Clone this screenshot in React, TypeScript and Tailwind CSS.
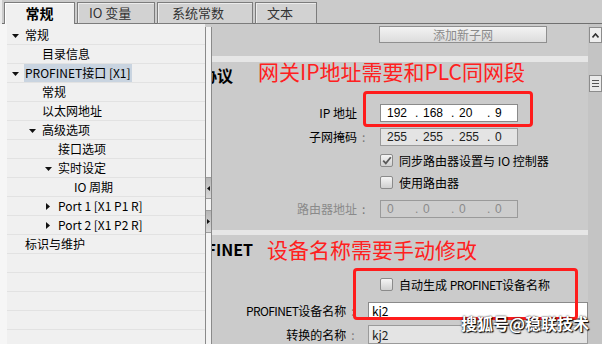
import React from "react";

type Node = {
  label: string;
  level: number;
  arrow?: "down" | "right";
  selected?: boolean;
};

const tree: Node[] = [
  { label: "常规", level: 0, arrow: "down" },
  { label: "目录信息", level: 1 },
  { label: "PROFINET接口 [X1]", level: 0, arrow: "down", selected: true },
  { label: "常规", level: 1 },
  { label: "以太网地址", level: 1 },
  { label: "高级选项", level: 1, arrow: "down" },
  { label: "接口选项", level: 2 },
  { label: "实时设定", level: 2, arrow: "down" },
  { label: "IO 周期", level: 3 },
  { label: "Port 1 [X1 P1 R]", level: 2, arrow: "right" },
  { label: "Port 2 [X1 P2 R]", level: 2, arrow: "right" },
  { label: "标识与维护", level: 0 },
];

const indent = ["pl-[5px]", "pl-[22px]", "pl-[38px]", "pl-[54px]"];

function Arrow({ dir }: { dir: "down" | "right" }) {
  if (dir === "down") {
    return (
      <svg width="7" height="4" viewBox="0 0 7 4" className="mt-[2px]">
        <path d="M0 0 H7 L3.5 4 Z" fill="#111" />
      </svg>
    );
  }
  return (
    <svg width="4" height="7" viewBox="0 0 4 7" className="ml-[1px]">
      <path d="M0 0 V7 L4 3.5 Z" fill="#111" />
    </svg>
  );
}

function TabBar() {
  return (
    <div className="flex h-[24px] items-end gap-[2px] bg-[#cbcbcb] shadow-[inset_0_-1px_0_#707070]">
      <div className="w-[2px] self-stretch bg-[#ececec]" />
      <div className="flex h-[22px] w-[71px] items-center justify-center border border-b-0 border-[#7c7c7c] bg-[#f0f0f0] text-[14px] font-bold text-black shadow-[inset_1px_1px_0_#ffffff]">
        常规
      </div>
      <div className="flex h-[22px] w-[78px] items-center border border-[#7c7c7c] bg-[#d2d2d2] pl-[11px] text-[13px] text-[#333] shadow-[inset_1px_1px_0_#ececec]">
        IO 变量
      </div>
      <div className="flex h-[22px] w-[96px] items-center border border-[#7c7c7c] bg-[#d2d2d2] pl-[14px] text-[13px] text-[#333] shadow-[inset_1px_1px_0_#ececec]">
        系统常数
      </div>
      <div className="flex h-[22px] w-[62px] items-center border border-[#7c7c7c] bg-[#d2d2d2] pl-[11px] text-[13px] text-[#333] shadow-[inset_1px_1px_0_#ececec]">
        文本
      </div>
    </div>
  );
}

function Tree() {
  return (
    <div className="flex w-[205px] bg-[#f0f0f0]">
      <div className="w-[7px] bg-[#f6f6f6]" />
      <div className="flex-1 pt-[2px]">
        {tree.map((n, i) => (
          <div
            key={i}
            className={`flex h-[19px] items-center border-b border-[#e2e2e2] text-[12px] text-black ${indent[n.level]}`}
          >
            <div className="flex w-[13px] items-center">
              {n.arrow && <Arrow dir={n.arrow} />}
            </div>
            {n.selected ? (
              <span className="-ml-[1px] flex h-full items-center bg-[#c9d4e0] px-[1px]">
                {n.label}
              </span>
            ) : (
              <span>{n.label}</span>
            )}
          </div>
        ))}
        {[0, 1, 2, 3, 4].map((i) => (
          <div key={i} className="h-[19px] border-b border-[#e2e2e2]" />
        ))}
      </div>
    </div>
  );
}

function Splitter() {
  return (
    <div className="mt-[3px] flex w-[7px] flex-col border-x border-[#8a8a8a] bg-[#f3f3f3]">
      <div className="h-[150px]" />
      <div className="flex h-[22px] items-center border-y border-[#9c9c9c] bg-gradient-to-b from-[#b6b6b6] to-[#d8d8d8]">
        <svg width="3" height="5" viewBox="0 0 3 5" className="ml-[1px]">
          <path d="M3 0 V5 L0 2.5 Z" fill="#111" />
        </svg>
      </div>
      <div className="h-[11px]" />
      <div className="flex h-[23px] items-center border-y border-[#9c9c9c] bg-gradient-to-b from-[#b6b6b6] to-[#d8d8d8]">
        <svg width="3" height="5" viewBox="0 0 3 5" className="ml-[1px]">
          <path d="M0 0 V5 L3 2.5 Z" fill="#111" />
        </svg>
      </div>
    </div>
  );
}

function CheckBox({ checked }: { checked?: boolean }) {
  return (
    <div className="flex h-[13px] w-[13px] items-center justify-center rounded-[2px] border border-[#8b8b8b] bg-gradient-to-b from-[#f5f5f5] to-[#d0d0d0]">
      {checked && (
        <svg width="10" height="9" viewBox="0 0 10 9">
          <path d="M1.2 4.6 L3.8 7.4 L8.8 1.2" fill="none" stroke="#5a5a5a" strokeWidth="1.8" />
        </svg>
      )}
    </div>
  );
}

function IpFields({ parts }: { parts: string[] }) {
  return (
    <div className="flex items-center pl-[6px] font-['Liberation_Sans',sans-serif] text-[12px]">
      {parts.map((p, i) => (
        <React.Fragment key={i}>
          <span className="w-[28px]">{p}</span>
          {i < 3 && <span className="w-[8px]">.</span>}
        </React.Fragment>
      ))}
    </div>
  );
}

function FieldRow({
  label,
  colon,
  gray,
  className,
  children,
}: {
  label: React.ReactNode;
  colon?: boolean;
  gray?: boolean;
  className: string;
  children: React.ReactNode;
}) {
  return (
    <div className={`flex items-center text-[12px] ${className}`}>
      <div className={`w-[145px] text-right ${gray ? "text-[#8a8a8a]" : "text-black"}`}>{label}</div>
      <div className="w-[23px] pl-[5px] text-[#777]">{colon ? ":" : ""}</div>
      {children}
    </div>
  );
}

function RightPane() {
  return (
    <div className="relative flex-1 overflow-hidden bg-[#cbcbcb]">
      <div className="h-[32px] pl-[167px] pt-[2px]">
        <div className="flex h-[17px] w-[168px] items-center justify-center border border-[#8f8f8f] bg-gradient-to-b from-[#f3f3f3] to-[#dcdcdc] text-[12px] text-[#8a8a8a]">
          添加新子网
        </div>
      </div>
      <div className="h-[6px] bg-[#e6e6e6]" />

      <div className="h-[168px]">
        <div className="-ml-[60px] flex h-[26px] w-[81px] items-center justify-end whitespace-nowrap text-[16px] font-bold text-black">
          IP 协议
        </div>
        <FieldRow label="IP 地址" className="mt-[16px] h-[18px]">
          <div className="flex h-[18px] w-[138px] items-center border border-[#8a8a8a] bg-white text-black">
            <IpFields parts={["192", "168", "20", "9"]} />
          </div>
        </FieldRow>
        <FieldRow label="子网掩码" colon className="mt-[6px] h-[18px]">
          <div className="flex h-[18px] w-[138px] items-center border border-[#9a9a9a] bg-[#e4e4e4] text-[#222]">
            <IpFields parts={["255", "255", "255", "0"]} />
          </div>
        </FieldRow>
        <div className="mt-[8px] flex h-[13px] items-center gap-[6px] pl-[168px] text-[12px] text-black">
          <CheckBox checked />
          <span>同步路由器设置与 IO 控制器</span>
        </div>
        <div className="mt-[9px] flex h-[13px] items-center gap-[6px] pl-[168px] text-[12px] text-black">
          <CheckBox />
          <span>使用路由器</span>
        </div>
        <FieldRow label="路由器地址" colon gray className="mt-[11px] h-[18px]">
          <div className="flex h-[18px] w-[138px] items-center border border-[#9a9a9a] bg-[#cdcdcd] text-[#8a8a8a]">
            <IpFields parts={["0", "0", "0", "0"]} />
          </div>
        </FieldRow>
      </div>
      <div className="h-[5px] bg-[#e6e6e6]" />

      <div>
        <div className="-ml-[60px] flex h-[28px] w-[101px] items-center justify-end whitespace-nowrap text-[16px] font-bold text-black">
          PROFINET
        </div>
        <div className="mt-[15px] flex h-[13px] items-center gap-[6px] pl-[168px] text-[12px] text-black">
          <CheckBox />
          <span>
            自动生成 <span className="tracking-[-0.6px]">PROFINET</span>设备名称
          </span>
        </div>
        <FieldRow
          label={
            <>
              <span className="tracking-[-0.6px]">PROFINET</span>设备名称
            </>
          }
          colon
          className="mt-[11px] h-[17px]"
        >
          <div className="flex h-[17px] w-[220px] shrink-0 items-center border border-[#8a8a8a] bg-white pl-[3px] text-black">
            kj2
          </div>
        </FieldRow>
        <FieldRow label="转换的名称" colon className="mt-[6px] h-[19px]">
          <div className="flex h-[19px] w-[220px] shrink-0 items-center border border-[#9a9a9a] bg-[#e4e4e4] pl-[3px] text-[#222]">
            kj2
          </div>
        </FieldRow>
      </div>
    </div>
  );
}

function ScrollBar() {
  return (
    <div className="flex w-[14px] flex-col bg-[#c4c4c4] pt-[3px]">
      <div className="ml-[1px] flex h-[16px] w-[13px] items-center justify-center border border-[#8c8c8c] bg-[#eeeeee]">
        <svg width="7" height="5" viewBox="0 0 7 5">
          <path d="M0.5 4.5 L3.5 1 L6.5 4.5" fill="none" stroke="#333" strokeWidth="1.6" />
        </svg>
      </div>
      <div className="h-[32px]" />
      <div className="ml-[1px] flex h-[17px] w-[13px] flex-col items-center justify-center gap-[2px] border border-[#8c8c8c] bg-[#eaeaea]">
        <div className="h-px w-[7px] bg-[#555]" />
        <div className="h-px w-[7px] bg-[#555]" />
        <div className="h-px w-[7px] bg-[#555]" />
      </div>
    </div>
  );
}

export default function App() {
  return (
    <div className="relative flex h-[344px] w-[602px] flex-col overflow-hidden bg-[#cbcbcb] font-['Noto_Sans_CJK_SC',sans-serif]">
      <TabBar />
      <div className="flex min-h-0 flex-1">
        <Tree />
        <Splitter />
        <RightPane />
        <ScrollBar />
      </div>

      {/* annotations drawn over the screenshot */}
      <div className="absolute left-[258px] top-[61px] whitespace-nowrap text-[21px] leading-none text-[#ff2020]">
        网关IP地址需要和PLC同网段
      </div>
      <div className="absolute left-[363px] top-[91px] h-[36px] w-[170px] rounded-[4px] border-[3px] border-[#ff1c1c]" />
      <div className="absolute left-[267px] top-[239px] whitespace-nowrap text-[21px] leading-none text-[#ff2020]">
        设备名称需要手动修改
      </div>
      <div className="absolute left-[353px] top-[268px] h-[52px] w-[225px] rounded-[4px] border-[3px] border-[#ff1c1c]" />
      <div className="absolute left-[461px] top-[315px] whitespace-nowrap text-[16px] font-bold leading-none text-white [text-shadow:0_0_2px_#000,1px_1px_1px_#000]">
        搜狐号@稳联技术
      </div>
    </div>
  );
}
